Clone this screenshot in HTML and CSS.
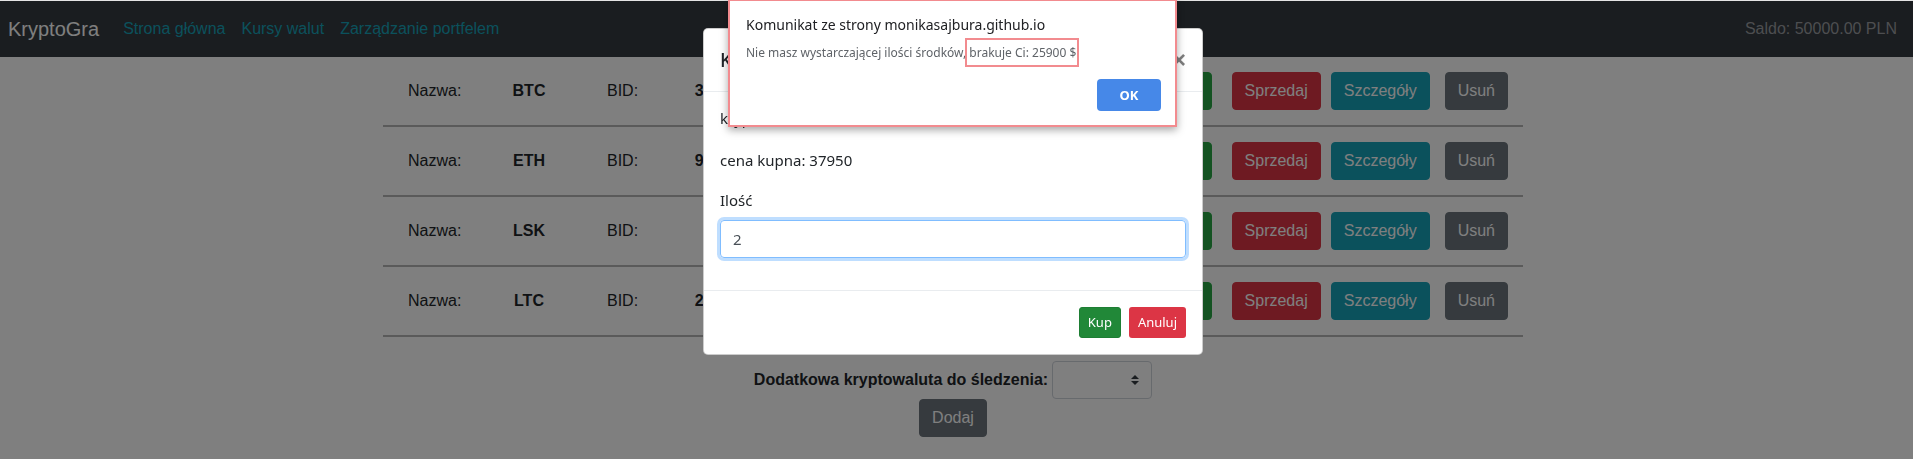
FILE: index.html
```html
<!DOCTYPE html>
<html lang="pl">
<head>
<meta charset="utf-8">
<title>KryptoGra</title>
<link rel="stylesheet" href="styles.css">
</head>
<body>
<nav class="navbar">
  <a class="brand" href="#">KryptoGra</a>
  <ul class="nav">
    <li><a class="nav-link" href="#">Strona główna</a></li>
    <li><a class="nav-link" href="#">Kursy walut</a></li>
    <li><a class="nav-link" href="#">Zarządzanie portfelem</a></li>
  </ul>
  <span class="saldo">Saldo: 50000.00 PLN</span>
</nav>

<div class="page">
  <main class="container">
    <div class="coin-row">
      <span class="c-label">Nazwa:</span>
      <span class="c-name">BTC</span>
      <span class="c-bid">BID:</span>
      <span class="c-value">37420.00</span>
      <div class="actions">
        <button class="btn btn-success a-kup">Kup</button>
        <button class="btn btn-danger a-sell">Sprzedaj</button>
        <button class="btn btn-info a-info">Szczegóły</button>
        <button class="btn btn-secondary">Usuń</button>
      </div>
    </div>
    <div class="coin-row">
      <span class="c-label">Nazwa:</span>
      <span class="c-name">ETH</span>
      <span class="c-bid">BID:</span>
      <span class="c-value">9620.150</span>
      <div class="actions">
        <button class="btn btn-success a-kup">Kup</button>
        <button class="btn btn-danger a-sell">Sprzedaj</button>
        <button class="btn btn-info a-info">Szczegóły</button>
        <button class="btn btn-secondary">Usuń</button>
      </div>
    </div>
    <div class="coin-row">
      <span class="c-label">Nazwa:</span>
      <span class="c-name">LSK</span>
      <span class="c-bid">BID:</span>
      <span class="c-value">14.530</span>
      <div class="actions">
        <button class="btn btn-success a-kup">Kup</button>
        <button class="btn btn-danger a-sell">Sprzedaj</button>
        <button class="btn btn-info a-info">Szczegóły</button>
        <button class="btn btn-secondary">Usuń</button>
      </div>
    </div>
    <div class="coin-row">
      <span class="c-label">Nazwa:</span>
      <span class="c-name">LTC</span>
      <span class="c-bid">BID:</span>
      <span class="c-value">206.4900</span>
      <div class="actions">
        <button class="btn btn-success a-kup">Kup</button>
        <button class="btn btn-danger a-sell">Sprzedaj</button>
        <button class="btn btn-info a-info">Szczegóły</button>
        <button class="btn btn-secondary">Usuń</button>
      </div>
    </div>

    <div class="add-form">
      <div class="add-line">
        <label class="add-label">Dodatkowa kryptowaluta do śledzenia:</label>
        <div class="select-box">
          <svg class="select-arrow" viewBox="0 0 4 5" width="8" height="10"><path d="M2 0L0 2h4zm0 5L0 3h4z" fill="#343a40"/></svg>
        </div>
      </div>
      <button class="btn btn-secondary">Dodaj</button>
    </div>
  </main>
</div>

<div class="backdrop"></div>
<div class="chrome-line"></div>

<div class="modal">
  <div class="modal-dialog">
    <div class="modal-content">
      <div class="modal-header">
        <h5 class="modal-title">Kupno BTC</h5>
        <span class="close">×</span>
      </div>
      <div class="modal-body">
        <p class="first-line">kryptowaluta: BTC</p>
        <p>cena kupna: 37950</p>
        <div class="form-group">
          <label class="form-label">Ilość</label>
          <div class="form-control">2</div>
        </div>
      </div>
      <div class="modal-footer">
        <button class="btn-sm btn-success btn-active">Kup</button>
        <button class="btn-sm btn-danger">Anuluj</button>
      </div>
    </div>
  </div>
</div>

<div class="alert-dialog">
  <div class="alert-title">Komunikat ze strony monikasajbura.github.io</div>
  <div class="alert-msg">Nie masz wystarczającej ilości środków, <span class="hl">brakuje Ci: 25900 $</span></div>
  <div class="alert-actions"><button class="alert-ok">OK</button></div>
</div>
</body>
</html>
```

FILE: styles.css
```css
* { box-sizing: border-box; }

html, body {
  margin: 0;
  height: 100%;
  overflow: hidden;
}

body {
  font-family: "Liberation Sans", Arial, sans-serif;
  font-size: 16px;
  line-height: 1.5;
  color: #212529;
  background: #fff;
}

/* navbar */
.navbar {
  display: flex;
  align-items: center;
  margin-top: 1px;
  height: 56px;
  padding: 8px 16px 8px 8px;
  background: #343a40;
}
.brand {
  font-size: 20px;
  line-height: 30px;
  padding: 5px 0;
  margin-right: 16px;
  color: #fff;
  text-decoration: none;
}
.nav {
  display: flex;
  list-style: none;
  margin: 0;
  padding: 0;
}
.nav-link {
  display: block;
  padding: 8px;
  color: #17a2b8;
  text-decoration: none;
}
.saldo {
  margin-left: auto;
  color: #9a9da0;
}

/* page */
.page {
  padding-right: 7px;
}
.container {
  width: 1140px;
  margin: 0 auto;
}
.coin-row {
  display: flex;
  align-items: center;
  height: 70px;
  padding: 0 15px 0 25px;
  border-bottom: 2px solid #b5b5b5;
}
.c-label { width: 82px; }
.c-name { width: 78px; text-align: center; font-weight: 700; }
.c-bid { width: 53px; margin-left: 39px; }
.c-value { width: 136px; text-align: center; font-weight: 700; }
.actions {
  margin-left: auto;
  display: flex;
}

.btn {
  font-family: "Liberation Sans", Arial, sans-serif;
  font-size: 16px;
  line-height: 24px;
  padding: 6px 12px;
  border: 1px solid transparent;
  border-radius: 4px;
  color: #fff;
  cursor: pointer;
}
.btn-success { background: #28a745; border-color: #28a745; }
.btn-danger { background: #dc3545; border-color: #dc3545; }
.btn-info { background: #17a2b8; border-color: #17a2b8; }
.btn-secondary { background: #6c757d; border-color: #6c757d; }
.a-kup { margin-right: 20px; }
.a-sell { margin-right: 10px; }
.a-info { margin-right: 15px; }

.add-form {
  display: flex;
  flex-direction: column;
  align-items: center;
  margin-top: 24px;
}
.add-line {
  display: flex;
  align-items: center;
}
.add-label {
  font-weight: 700;
  margin-right: 4px;
}
.select-box {
  width: 100px;
  height: 38px;
  border: 1px solid #ced4da;
  border-radius: 4px;
  background: #fff;
  display: flex;
  align-items: center;
  justify-content: flex-end;
  padding-right: 12px;
}
.select-arrow { display: block; }

/* backdrop */
.backdrop {
  position: fixed;
  inset: 0;
  background: rgba(0, 0, 0, 0.5);
  z-index: 1040;
}
.chrome-line {
  position: fixed;
  top: 0;
  left: 0;
  right: 0;
  height: 1px;
  background: #e4e4e4;
  z-index: 1045;
}

/* modal */
.modal {
  position: fixed;
  inset: 0;
  z-index: 1050;
  padding-right: 7px;
  font-family: "Noto Sans", "Open Sans", sans-serif;
  font-size: 15px;
  line-height: 24px;
  color: #212529;
}
.modal-dialog {
  width: 500px;
  margin: 28px auto;
}
.modal-content {
  background: #fff;
  border: 1px solid rgba(0, 0, 0, 0.2);
  border-radius: 5px;
}
.modal-header {
  display: flex;
  align-items: flex-start;
  padding: 16px;
  border-bottom: 1px solid #e9ecef;
}
.modal-title {
  margin: 0;
  font-size: 19px;
  font-weight: 500;
  line-height: 30px;
}
.close {
  margin-left: auto;
  margin-top: 3px;
  font-size: 24px;
  font-weight: 700;
  line-height: 24px;
  color: #000;
  opacity: 0.5;
  font-family: "Liberation Sans", Arial, sans-serif;
}
.modal-body {
  padding: 14px 16px 16px;
}
.modal-body p {
  margin: 0 0 16px;
}
.modal-body .first-line {
  margin-bottom: 18px;
}
.form-group {
  margin-bottom: 16px;
}
.form-label {
  display: inline-block;
  margin-bottom: 8px;
}
.form-control {
  height: 38px;
  padding: 6px 12px;
  border: 1px solid #80bdff;
  border-radius: 4px;
  box-shadow: 0 0 0 3px rgba(0, 123, 255, 0.25);
  color: #495057;
  font-size: 15px;
  line-height: 24px;
}
.modal-footer {
  display: flex;
  justify-content: flex-end;
  gap: 8px;
  padding: 16px;
  border-top: 1px solid #e9ecef;
}
.btn-sm {
  font-family: "Noto Sans", "Open Sans", sans-serif;
  font-size: 13px;
  line-height: 21px;
  padding: 4px 8px;
  border: 1px solid transparent;
  border-radius: 3px;
  color: #fff;
}
.btn-active {
  background: #218838;
  border-color: #1e7e34;
}

/* native alert */
.alert-dialog {
  position: fixed;
  top: -1px;
  left: 728px;
  width: 449px;
  height: 128px;
  z-index: 1100;
  background: #fff;
  border: 2px solid #f28b8f;
  box-shadow: 0 3px 8px rgba(0, 0, 0, 0.35);
  padding: 14px 14px 14px 16px;
  font-family: "Noto Sans", "Open Sans", sans-serif;
}
.alert-title {
  font-size: 14px;
  line-height: 20px;
  color: #202124;
}
.alert-msg {
  margin-top: 8px;
  font-size: 12px;
  line-height: 20px;
  color: #5f6368;
}
.hl {
  position: relative;
}
.hl::after {
  content: "";
  position: absolute;
  left: -4px;
  right: -3px;
  top: -6px;
  bottom: -6px;
  border: 2px solid #f28b8f;
}
.alert-actions {
  display: flex;
  justify-content: flex-end;
  margin-top: 16px;
}
.alert-ok {
  width: 64px;
  height: 32px;
  border: 0;
  border-radius: 4px;
  background: #4688e8;
  color: #fff;
  font-family: "Noto Sans", "Open Sans", sans-serif;
  font-size: 13px;
  font-weight: 700;
}
```
